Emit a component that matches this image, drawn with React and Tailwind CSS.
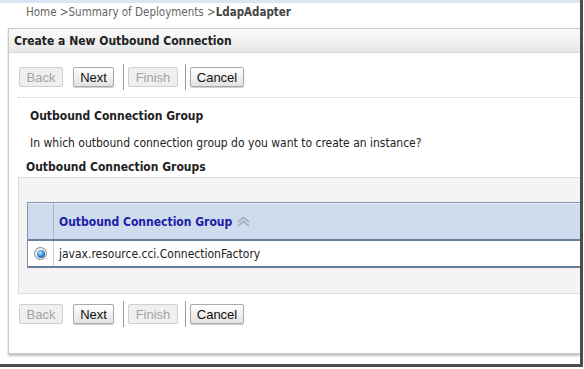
import React from 'react';

const TAHOMA = "font-['DejaVu_Sans_Condensed','DejaVu_Sans',sans-serif]";
const ARIAL = "font-['Liberation_Sans',Arial,sans-serif]";

function Btn({ label, width, disabled }) {
  return (
    <button
      className={`h-[20px] ${width} rounded-[2px] border text-[13px] leading-none ${ARIAL} ${
        disabled
          ? 'border-[#cfcfcf] bg-[#efefef] text-[#a3a3a3]'
          : 'border-[#a9a9a9] bg-gradient-to-b from-[#ffffff] to-[#e2e2e2] text-[#111] shadow-[0_1px_1px_rgba(0,0,0,0.2)]'
      }`}
    >
      {label}
    </button>
  );
}

function Sep() {
  return <span className="mx-[4px] h-[26px] w-px bg-[#9a9a9a]" />;
}

function ButtonBar() {
  return (
    <div className="flex h-[26px] items-center pl-[10px]">
      <Btn label="Back" width="w-[44px]" disabled />
      <span className="w-[10px]" />
      <Btn label="Next" width="w-[41px]" />
      <span className="w-[5px]" />
      <Sep />
      <Btn label="Finish" width="w-[50px]" disabled />
      <span className="w-[3px]" />
      <Sep />
      <Btn label="Cancel" width="w-[54px]" />
    </div>
  );
}

function SortIcon() {
  return (
    <svg width="15" height="11" viewBox="0 0 15 11" className="ml-[4px]">
      <path d="M2 6 L7.5 1.5 L13 6" fill="none" stroke="#a7b1c2" strokeWidth="2" />
      <path d="M2 10 L7.5 5.5 L13 10" fill="none" stroke="#a7b1c2" strokeWidth="2" />
    </svg>
  );
}

export default function App() {
  return (
    <div className={`h-[369px] w-[584px] bg-white ${TAHOMA}`}>
      <div className="h-[367px] w-[583px] overflow-hidden border-b-[3px] border-r-[3px] border-[#4d4d4d]">
        <div className="h-[3px] bg-[#d8e7f5]" />
        <div className="flex h-[25px] items-center pb-[5px] pl-[26px] text-[11.5px] text-[#666]">
          Home &gt;Summary of Deployments &gt;<span className="font-bold text-[#444]">LdapAdapter</span>
        </div>

        <div className="ml-[8px] h-[326px] border-b border-l border-t border-[#c9c9c9] shadow-[0_2px_2px_rgba(0,0,0,0.25)]">
          <div className="flex h-[24px] items-center border-b border-[#d9d9d9] bg-gradient-to-b from-[#fbfbfb] to-[#e7e7e7] pl-[5px] pt-[1px] text-[12px] font-bold text-[#222]">
            Create a New Outbound Connection
          </div>

          <div className="pt-[11px]">
            <ButtonBar />
          </div>

          <div className="ml-[9px] mt-[7px] border-t border-dotted border-[#cfcfcf]">
            <div className="flex h-[32px] items-center pl-[12px] pt-[3px] text-[12px] font-bold text-[#222]">
              Outbound Connection Group
            </div>
            <div className="flex h-[24px] items-center pl-[12px] pt-[1px] text-[12px] text-[#222]">
              In which outbound connection group do you want to create an instance?
            </div>
            <div className="flex h-[23px] items-center pl-[8px] pt-[2px] text-[12px] font-bold text-[#222]">
              Outbound Connection Groups
            </div>

            <div className="h-[117px] border border-r-0 border-[#dcdcdc] bg-[#f4f4f4] pl-[8px] pt-[24px]">
              <div className="border-l border-t border-[#7f95ae] bg-white">
                <div className="flex h-[38px] border-b-2 border-[#687f9c] bg-[#cfdcee] shadow-[inset_0_1px_0_#e6eef8]">
                  <div className="w-[26px] border-r border-[#a9b9cc]" />
                  <div className="flex items-center pl-[5px] pt-[1px] text-[12px] font-bold text-[#1c1ca8]">
                    Outbound Connection Group
                    <SortIcon />
                  </div>
                </div>
                <div className="flex h-[27px] border-b-2 border-[#687f9c]">
                  <div className="flex w-[26px] items-center justify-center border-r border-[#c6d0dc]">
                    <span className="flex h-[13px] w-[13px] items-center justify-center rounded-full border border-[#8a8a8a] bg-[#f0f0f0]">
                      <span className="h-[8px] w-[8px] rounded-full bg-[radial-gradient(circle_at_40%_35%,#bfe3ff,#2d7fd6_55%,#0b3f86)]" />
                    </span>
                  </div>
                  <div className="flex items-center pl-[5px] text-[12px] text-[#222]">
                    javax.resource.cci.ConnectionFactory
                  </div>
                </div>
              </div>
            </div>
          </div>

          <div className="pt-[7px]">
            <ButtonBar />
          </div>
        </div>
      </div>
    </div>
  );
}
